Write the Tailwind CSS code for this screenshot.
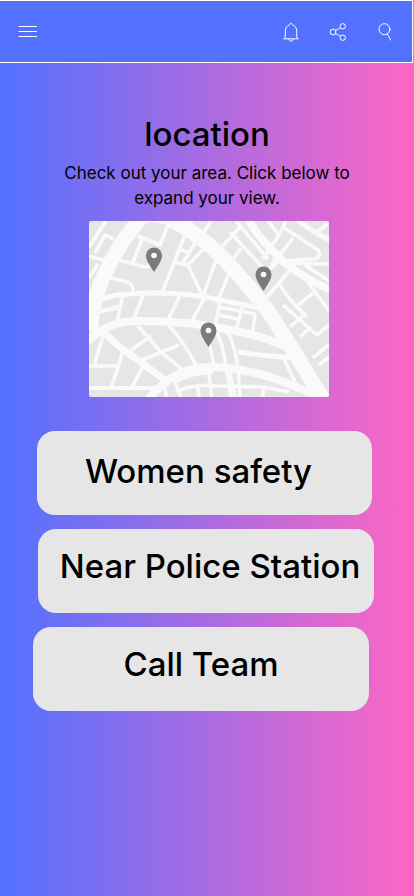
<!DOCTYPE html>
<html lang="en">
<head>
<meta charset="utf-8">
<meta name="viewport" content="width=device-width, initial-scale=1">
<title>Location</title>
<script src="https://cdn.jsdelivr.net/npm/@tailwindcss/browser@4"></script>
</head>
<body class="min-h-screen bg-linear-to-r/srgb from-[#5271ff] to-[#ff66c4] font-['Inter','Liberation_Sans',sans-serif] text-black">
<header class="mr-px flex h-[63px] items-center justify-between border-y border-r border-white bg-[#5271ff] px-[17px] text-white">
  <button type="button" aria-label="Menu" class="block">
    <svg class="block h-5 w-5" viewBox="0 0 20 20" fill="none" stroke="currentColor"><path d="M1.500 4.500h19M1.500 9.500h19M1.500 14.500h19"/></svg>
  </button>
  <div class="flex items-center gap-[27px]">
    <button type="button" aria-label="Notifications" class="block">
      <svg class="block h-5 w-5" viewBox="0 0 20 20" fill="none" stroke="currentColor" stroke-linejoin="round"><path d="M4.300 15.500V9.500C4.300 6 5.800 3.600 8.600 2.900C8.600 .7 11.400 .7 11.400 2.900C14.200 3.600 15.700 6 15.700 9.500V15.500L17.300 16.800H2.700Z"/><path d="M7.800 17C8 19.700 12 19.700 12.200 17"/></svg>
    </button>
    <button type="button" aria-label="Share" class="block">
      <svg class="block h-5 w-5" viewBox="0 0 20 20" fill="none" stroke="currentColor"><circle cx="5" cy="10" r="2.900"/><circle cx="14.800" cy="4.300" r="2.700"/><circle cx="14.800" cy="15.700" r="2.700"/><path d="M7.500 8.600l4.900-2.900M7.500 11.400l4.900 2.900"/></svg>
    </button>
    <button type="button" aria-label="Search" class="block">
      <svg class="block h-5 w-5" viewBox="0 0 20 20" fill="none" stroke="currentColor" stroke-linecap="round"><circle cx="9.500" cy="7.200" r="5.500"/><path d="M12.300 12l3.400 6"/></svg>
    </button>
  </div>
</header>
<main>
  <section class="flex flex-col items-center pt-[51px] text-center">
    <h1 class="text-[33px] font-medium leading-10">location</h1>
    <p class="mt-[7px] max-w-[300px] text-[17px] leading-[25px]">Check out your area. Click below to expand your view.</p>
    <button type="button" aria-label="Expand map" class="ml-[3px] mt-[10px] block w-[240px]">
      <svg class="block w-full rounded-xs" viewBox="0 0 240 176" fill="none">
        <rect width="240" height="176" fill="#e6e6e6"/>
        <g stroke="#fafafa" stroke-width="3.600" stroke-linejoin="round">
          <path d="M0 26L18-2M0 35L17 40M6 32L16 14L25 18M0 57L9 43"/>
          <path d="M49 15L71 24L79 4M44 41L54 16M30 39L56 46Q61 47 64 40M21 57L39 61Q45 64 44 73"/>
          <path d="M73 72L94 19L103-2M84 41L99 44L119 23M99 44L114 76M91 28L99 32M94 42L110 15"/>
          <path d="M8 91L31 85M28 101L34 73M0 93L28 87M54 74L44 100M91 74L78 101M116 76L102 102"/>
          <path d="M113 15L123-2M131 28L152 5M141 11L176 49M147 0L179 38M144 38L152 27M128 36L113 78M141 50L128 82"/>
          <path d="M174 38L183 24Q194 10 197-2M178-2L190 15M194 6L229 29Q233 36 226 38L193 40M204 17L189 36M196 42L240 43M216 44L240 60M228 11L240 2M182 46L188 33M178 76L201 49M170 58L194 36"/>
          <path d="M191 63Q196 75 218 96M208 85L228 69M131 80L126 106M131 86L166 93L163 115M129 94L149 98M154 84L146 112"/>
          <path d="M194 84L228 114L240 104M201 106L216 93M211 116L222 106M218 60L240 90M224 137L240 123M230 144L240 136"/>
          <path d="M14 115L5 145M0 145H29M34 130L22 168M54 145L42 168M41 130L62 115M48 104L72 131L96 151M53 139L90 124M79 104Q95 120 108 146"/>
          <path d="M126 108Q134 122 137 146L142 176M138 110Q145 120 149 148L151 176M119 116L125 145M119 146L123 176M140 146L146 176"/>
          <path d="M194 136L208 165M92 176L84 157M78 176L74 162M84 162Q102 152 124 151M87 171Q105 162 128 165L174 166L200 171M109 166L110 176M174 168V176"/>
        </g>
        <g stroke="#fafafa" stroke-linejoin="round">
          <path stroke-width="15" d="M1 110Q4 80 13 59Q26 30 40 12Q48 1 54-6"/>
          <path stroke-width="15" d="M50-3Q58-9 78-4Q114 15 137 40Q160 65 180 91L209 137L236 182"/>
          <path stroke-width="5" d="M1 89Q9 77 28 74Q77 69 121 77L180 89"/>
          <path stroke-width="8" d="M-2 121Q20 100 45 100Q96 99 142 109Q180 116 211 132"/>
          <path stroke-width="7" d="M14 111Q34 130 52 141L81 163"/>
          <path stroke-width="8" d="M59 178L75 162Q94 146 124 146Q166 148 202 164L235 177"/>
          <path stroke-width="4" d="M0 167H68"/>
          <path stroke-width="5" d="M149 131Q174 135 209 137"/>
          <path stroke-width="8" d="M160-2Q165 12 190 36Q203 51 241 69"/>
          <path stroke-width="5" d="M207-2Q219 8 242 20"/>
        </g>
        <g fill="#7b7b7b">
          <path d="M65 26.500a8 8 0 0 1 8 8c0 5-4 10-8 16.500c-4-6.500-8-11.500-8-16.500a8 8 0 0 1 8-8z"/>
          <path d="M174.500 45.500a8 8 0 0 1 8 8c0 5-4 10-8 16.500c-4-6.500-8-11.500-8-16.500a8 8 0 0 1 8-8z"/>
          <path d="M119.500 101.500a8 8 0 0 1 8 8c0 5-4 10-8 16.500c-4-6.500-8-11.500-8-16.500a8 8 0 0 1 8-8z"/>
        </g>
        <g fill="#fafafa"><circle cx="65" cy="34.500" r="2.800"/><circle cx="174.500" cy="53.500" r="2.800"/><circle cx="119.500" cy="109.500" r="2.800"/></g>
      </svg>
    </button>
  </section>
  <nav aria-label="Help" class="mt-[34px] flex flex-col gap-[14px] text-[33px] font-medium leading-10">
    <button type="button" class="ml-[37px] mr-[42px] h-[84px] whitespace-nowrap rounded-[18px] bg-[#e6e6e6] pb-1 pr-3">Women safety</button>
    <button type="button" class="ml-[38px] mr-[40px] h-[84px] whitespace-nowrap rounded-[18px] bg-[#e6e6e6] pb-[10px] pl-2">Near Police Station</button>
    <button type="button" class="ml-[33px] mr-[45px] h-[84px] whitespace-nowrap rounded-[18px] bg-[#e6e6e6] pb-[10px]">Call Team</button>
  </nav>
</main>
</body>
</html>
